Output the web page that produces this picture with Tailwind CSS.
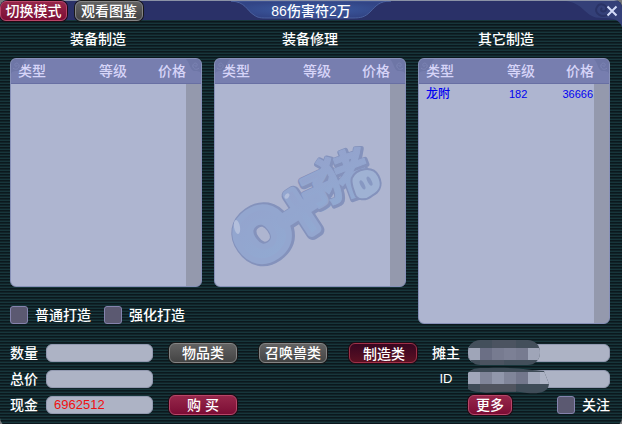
<!DOCTYPE html>
<html lang="zh-CN">
<head>
  <meta charset="UTF-8" />
  <meta name="viewport" content="width=device-width, initial-scale=1.0" />
  <title>86伤害符2万</title>
  <script src="https://cdn.jsdelivr.net/npm/@tailwindcss/browser@4"></script>
</head>
<body class="bg-[#77797c] font-['Liberation_Sans','Noto_Sans_CJK_SC',sans-serif] text-sm leading-5 font-medium text-white">
  <!-- shared corner swirl -->
  <svg class="hidden">
    <symbol id="swirl" viewBox="0 0 16 16">
      <path d="M1 0H16V15C15 12 13 12 10 12C5 12 5 4 1 0Z" fill="#6e76a6" />
      <path d="M14 9C11 12 7 9 8 6C9 3 13 4 12 6C12 8 10 8 10 6" fill="none" stroke="#7d85b4" />
    </symbol>
  </svg>

  <div class="min-h-screen overflow-hidden rounded-lg bg-[repeating-linear-gradient(to_bottom,#0b181d_0px,#0b181d_1px,#112429_1px,#112429_2px,#17363b_2px,#17363b_3px)]">
    <header class="relative flex h-5 items-center justify-between border-t border-[#8a92a6] bg-[#2a3168]">
      <div class="flex gap-2">
        <button class="h-5 w-[67px] rounded-md border border-[#b84568] bg-linear-to-b from-[#96264a] to-[#7c0c35] leading-4 shadow-[0_0_0_1px_#200a14]">切换模式</button>
        <button class="h-5 w-[68px] rounded-md border border-[#858585] bg-linear-to-b from-[#626262] to-[#444444] leading-4 shadow-[0_0_0_1px_#181818]">观看图鉴</button>
      </div>
      <div class="absolute inset-x-0 top-0 flex justify-center pointer-events-none">
        <svg class="absolute top-0 h-[18px] w-[160px]" viewBox="0 0 160 18">
          <defs>
            <radialGradient id="plate">
              <stop offset="0" stop-color="#3d5da4" />
              <stop offset="1" stop-color="#324586" />
            </radialGradient>
          </defs>
          <path d="M0 0C15 1 15 9 23 14C27 17 30 17 36 17H122C130 17 134 16 139 11C145 5 148 0 160 0Z" fill="url(#plate)" stroke="#4a609e" />
        </svg>
        <h1 class="relative">86伤害符2万</h1>
      </div>
      <svg class="absolute right-0 top-0 h-[26px] w-14" viewBox="0 0 56 26">
        <path d="M0 0H56V26C53 18 47 17 36 17C18 17 20 3 0 0Z" fill="#344078" />
        <path d="M43 13C36 18 27 12 31 6C34 1 42 4 40 9C38 12 33 10 36 7" fill="none" stroke="#2a3366" stroke-width="2" />
      </svg>
      <button aria-label="关闭" class="relative mr-1">
        <svg class="size-3" viewBox="0 0 12 12" fill="none" stroke="#d4dcf8" stroke-width="2">
          <path d="M1.500 1.500L10.500 10.500M10.500 1.500L1.500 10.500" />
        </svg>
      </button>
    </header>

    <main class="pt-[9px] pr-3 pb-2 pl-[10px]">
      <div class="grid grid-cols-3 grid-rows-[auto_auto_1fr] gap-x-3">
        <h2 class="mb-[9px] pr-4 text-center">装备制造</h2>
        <h2 class="mb-[9px] text-center">装备修理</h2>
        <h2 class="mb-[9px] pr-4 text-center">其它制造</h2>

        <section class="relative min-h-[229px] overflow-hidden rounded-md border border-[#8790b8] bg-[linear-gradient(to_left,#9499ad_15px,#aeb5d0_15px)]">
          <table class="w-full table-fixed bg-[#777eaf] text-left text-[#d6d4f8]">
            <thead>
              <tr class="h-6 border-b border-[#686fa3]">
                <th class="w-[80px] pl-[7px] font-medium">类型</th>
                <th class="w-[59px] pl-2 font-medium">等级</th>
                <th class="pl-2 font-medium">价格</th>
              </tr>
            </thead>
          </table>
          <svg class="absolute left-0 top-0 size-4 -scale-x-100"><use href="#swirl" /></svg>
          <svg class="absolute right-0 top-0 size-4"><use href="#swirl" /></svg>
        </section>

        <section class="relative min-h-[229px] overflow-hidden rounded-md border border-[#8790b8] bg-[linear-gradient(to_left,#9499ad_15px,#aeb5d0_15px)]">
          <table class="w-full table-fixed bg-[#777eaf] text-left text-[#d6d4f8]">
            <thead>
              <tr class="h-6 border-b border-[#686fa3]">
                <th class="w-[80px] pl-[7px] font-medium">类型</th>
                <th class="w-[59px] pl-2 font-medium">等级</th>
                <th class="pl-2 font-medium">价格</th>
              </tr>
            </thead>
          </table>
          <svg class="absolute left-0 top-0 size-4 -scale-x-100"><use href="#swirl" /></svg>
          <svg class="absolute right-0 top-0 size-4"><use href="#swirl" /></svg>
          <!-- watermark -->
          <svg class="absolute left-0 top-[71px] h-[150px] w-[190px] overflow-visible font-['Liberation_Sans','Noto_Sans_CJK_SC',sans-serif] font-bold" viewBox="0 0 190 150">
            <defs>
              <linearGradient id="ink" x1="0" y1="0" x2="0" y2="1">
                <stop offset="0" stop-color="#94a3cd" />
                <stop offset="1" stop-color="#91aad2" />
              </linearGradient>
            </defs>
            <g text-anchor="middle" stroke-linejoin="round" paint-order="stroke">
              <g fill="#8492bc" stroke="#8492bc">
                <text transform="translate(48 104) rotate(-35)" y="23" font-size="66" stroke-width="16">O</text>
                <text transform="translate(88 83) rotate(-33)" y="18" font-size="48" stroke-width="13">十</text>
                <text transform="translate(105 60) rotate(-25)" y="13" font-size="36" stroke-width="8">子</text>
                <text transform="translate(131 47) rotate(-20)" y="19" font-size="52" stroke-width="5">猪</text>
              </g>
              <g fill="url(#ink)" stroke="#93a6cf">
                <text transform="translate(47 104) rotate(-35)" y="23" font-size="66" stroke-width="12">O</text>
                <text transform="translate(87 82) rotate(-33)" y="18" font-size="48" stroke-width="9">十</text>
                <text transform="translate(104 59) rotate(-25)" y="13" font-size="36" stroke-width="4">子</text>
                <text transform="translate(130 46) rotate(-20)" y="19" font-size="52" stroke-width="1">猪</text>
              </g>
            </g>
            <g transform="translate(151 53) rotate(-18)">
              <path d="M-12 -9C-5 -17 12 -15 14 -3C16 9 8 13 2 14C-6 17 -14 14 -14 7C-14 1 -15 -4 -12 -9Z" fill="#9fb2d4" stroke="#8492bc" stroke-width="2" />
              <ellipse cx="-4" rx="2" ry="5" transform="rotate(-10)" fill="#8798c2" />
              <ellipse cx="4" rx="2" ry="5" transform="rotate(-10)" fill="#8798c2" />
            </g>
            <ellipse cx="22" cy="97" rx="3" ry="7" transform="rotate(-10 22 97)" fill="#b3bfdc" />
            <ellipse cx="72" cy="66" rx="2" ry="3" transform="rotate(35 72 66)" fill="#b3bfdc" />
          </svg>
        </section>

        <section class="relative row-span-2 min-h-[266px] overflow-hidden rounded-md border border-[#8790b8] bg-[linear-gradient(to_left,#9499ad_15px,#aeb5d0_15px)]">
          <table class="w-full table-fixed text-left">
            <thead class="bg-[#777eaf] text-[#d6d4f8]">
              <tr class="h-6 border-b border-[#686fa3]">
                <th class="w-[80px] pl-[7px] font-medium">类型</th>
                <th class="w-[59px] pl-2 font-medium">等级</th>
                <th class="pl-2 font-medium">价格</th>
              </tr>
            </thead>
            <tbody class="text-[11px] text-[#0000f0]">
              <tr class="h-5">
                <td class="pl-[7px] text-xs">龙附</td>
                <td class="pl-[10px]">182</td>
                <td class="pr-4 text-right">36666</td>
              </tr>
            </tbody>
          </table>
          <svg class="absolute left-0 top-0 size-4 -scale-x-100"><use href="#swirl" /></svg>
          <svg class="absolute right-0 top-0 size-4"><use href="#swirl" /></svg>
        </section>

        <div class="col-span-2 flex items-end gap-[13px]">
          <label class="flex h-[18px] items-center gap-[7px]">
            <input type="checkbox" class="size-[18px] appearance-none rounded-[3px] border border-[#8583ae] bg-[#5b5971]" />普通打造
          </label>
          <label class="flex h-[18px] items-center gap-[7px]">
            <input type="checkbox" class="size-[18px] appearance-none rounded-[3px] border border-[#8583ae] bg-[#5b5971]" />强化打造
          </label>
        </div>
      </div>

      <form class="mt-4 flex justify-between">
        <div class="flex gap-4">
          <div class="flex flex-col">
            <div class="flex h-[26px] items-center gap-2">
              <label for="count">数量</label>
              <input id="count" class="h-[18px] w-[107px] rounded-md border border-[#9299b0] bg-[#adb3c5] px-[7px] text-[13px] text-[#f01010]" />
            </div>
            <div class="flex h-[26px] items-center gap-2">
              <label for="total">总价</label>
              <input id="total" class="h-[18px] w-[107px] rounded-md border border-[#9299b0] bg-[#adb3c5] px-[7px] text-[13px] text-[#f01010]" />
            </div>
            <div class="flex h-[26px] items-center gap-2">
              <label for="cash">现金</label>
              <input id="cash" value="6962512" class="h-[18px] w-[107px] rounded-md border border-[#9299b0] bg-[#adb3c5] px-[7px] text-[13px] text-[#f01010]" />
            </div>
          </div>
          <div class="flex flex-col justify-between">
            <div class="flex h-[26px] items-center gap-[22px]">
              <button type="button" class="h-5 w-[68px] rounded-md border border-[#858585] bg-linear-to-b from-[#626262] to-[#444444] leading-4 shadow-[0_0_0_1px_#181818]">物品类</button>
              <button type="button" class="h-5 w-[68px] rounded-md border border-[#858585] bg-linear-to-b from-[#626262] to-[#444444] leading-4 shadow-[0_0_0_1px_#181818]">召唤兽类</button>
              <button type="button" class="h-5 w-[68px] rounded-md border border-[#a03048] bg-linear-to-b from-[#380620] to-[#5c1022] pt-0.5 pl-0.5 leading-4 shadow-[0_0_0_1px_#200a14]">制造类</button>
            </div>
            <div class="flex h-[26px] items-center">
              <button type="button" class="h-5 w-[68px] rounded-md border border-[#b84568] bg-linear-to-b from-[#96264a] to-[#7c0c35] leading-4 shadow-[0_0_0_1px_#200a14]">购 买</button>
            </div>
          </div>
        </div>

        <div class="flex flex-col">
          <div class="flex h-[26px] items-center gap-2">
            <label for="owner" class="w-7 text-center">摊主</label>
            <div class="relative">
              <input id="owner" class="block h-[18px] w-[142px] rounded-md border border-[#9299b0] bg-[#adb3c5] px-[7px] text-[13px]" />
              <svg class="absolute left-0 -top-1 h-[25px] w-[73px]" viewBox="0 0 73 25">
                <clipPath id="blotA"><rect width="72" height="25" rx="12" /></clipPath>
                <g clip-path="url(#blotA)">
                  <path fill="#434f5b" d="M0 0H73V25H0Z" />
                  <path fill="#4b5360" d="M24 0h24v8H24zM12 20h24v5H12z" />
                  <path fill="#9fa5b8" d="M0 8h12v12H0zM60 8h13v12H60z" />
                  <path fill="#6b6f85" d="M12 8h12v12H12z" />
                  <path fill="#777b90" d="M24 8h12v12H24zM48 8h12v12H48z" />
                  <path fill="#7c8095" d="M36 8h12v12H36z" />
                </g>
              </svg>
            </div>
          </div>
          <div class="flex h-[26px] items-center gap-2">
            <label for="owner-id" class="w-7 text-center text-[13px]">ID</label>
            <div class="relative">
              <input id="owner-id" class="block h-[18px] w-[142px] rounded-md border border-[#9299b0] bg-[#adb3c5] px-[7px] text-[13px]" />
              <svg class="absolute left-0 -top-[3px] h-[27px] w-[82px]" viewBox="0 0 82 27">
                <clipPath id="blotB"><path d="M0 6C5 0 12 1 20 1C45 0 62 3 76 4L81 17C80 28 65 27 52 25C30 24 8 28 0 22Z" /></clipPath>
                <g clip-path="url(#blotB)">
                  <path fill="#3f4c58" d="M0 0H82V27H0Z" />
                  <path fill="#50545f" d="M12 17h36v10H12z" />
                  <path fill="#a1a7ba" d="M0 5h12v12H0zM60 5h12v12H60z" />
                  <path fill="#808599" d="M12 5h12v12H12zM36 5h12v12H36z" />
                  <path fill="#9197ab" d="M24 5h12v12H24z" />
                  <path fill="#73778c" d="M48 5h12v12H48z" />
                  <path fill="#adb3c5" d="M72 5h12v12H72z" />
                </g>
              </svg>
            </div>
          </div>
          <div class="flex h-[26px] items-center justify-between pl-9">
            <button type="button" class="h-5 w-11 rounded-md border border-[#b84568] bg-linear-to-b from-[#96264a] to-[#7c0c35] leading-4 shadow-[0_0_0_1px_#200a14]">更多</button>
            <label class="flex items-center gap-[7px]">
              <input type="checkbox" class="size-[18px] appearance-none rounded-[3px] border border-[#8583ae] bg-[#5b5971]" />关注
            </label>
          </div>
        </div>
      </form>
    </main>
  </div>
</body>
</html>
